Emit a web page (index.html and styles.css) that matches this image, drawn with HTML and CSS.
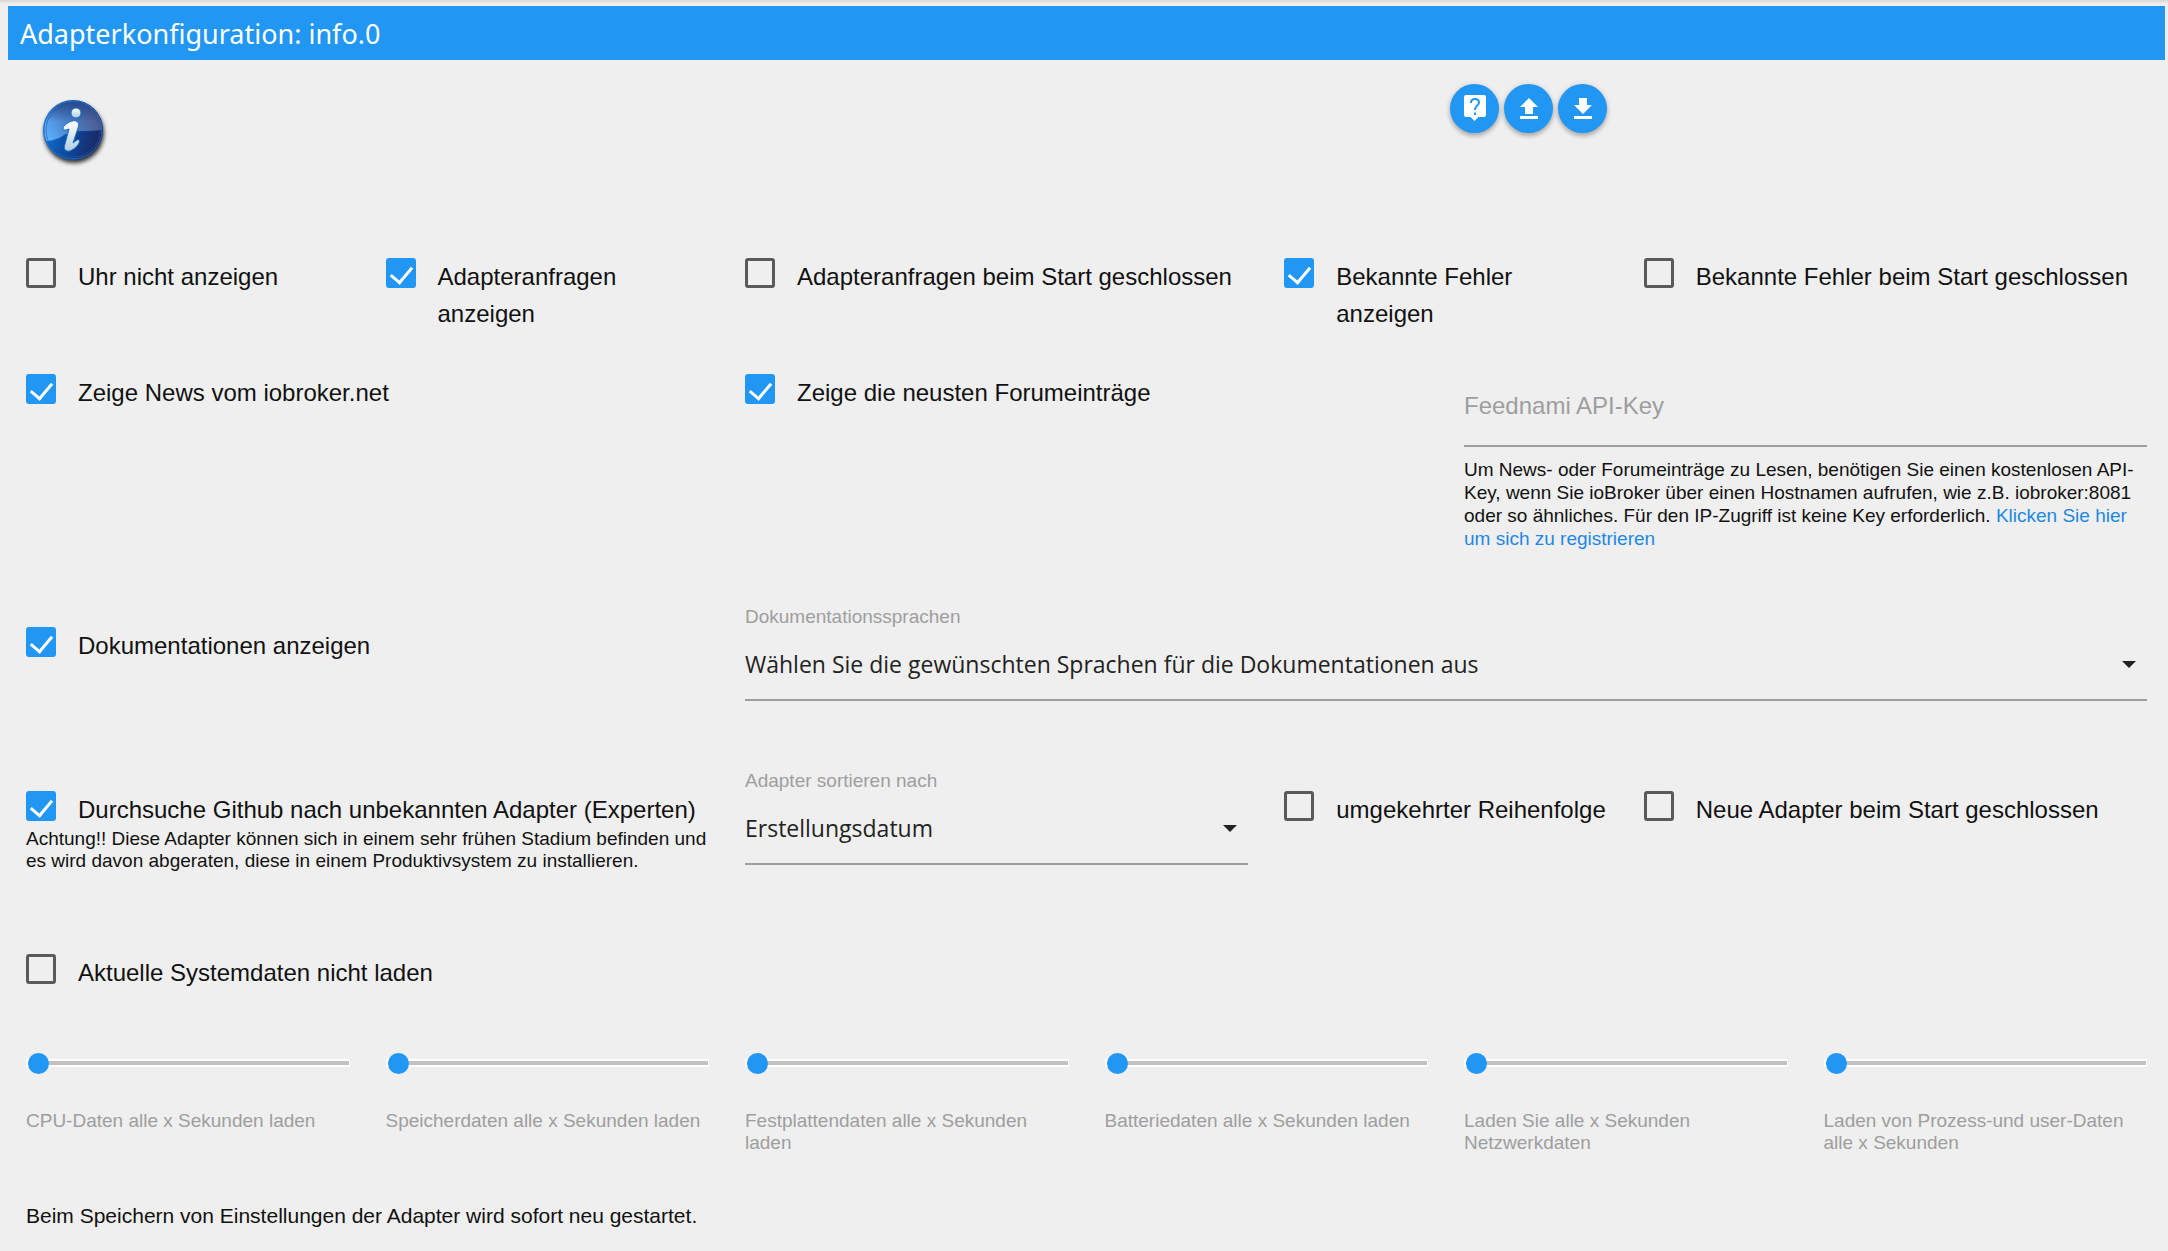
FILE: index.html
```html
<!DOCTYPE html>
<html lang="de">
<head>
<meta charset="utf-8">
<meta name="viewport" content="width=device-width, initial-scale=1">
<title>Adapterkonfiguration: info.0</title>
<link rel="stylesheet" href="styles.css">
</head>
<body>
<header class="titlebar"><h1 class="title">Adapterkonfiguration: info.0</h1></header>
<main class="page">
  <div class="row toolbar">
    <div class="col s8">
      <svg class="logo" viewBox="0 0 72 72" role="img" aria-label="info">
        <defs>
          <linearGradient id="base" x1="0" y1="0.3" x2="1" y2="0.6">
            <stop offset="0" stop-color="#0a7be6"/><stop offset="0.5" stop-color="#0d4a9f"/><stop offset="1" stop-color="#1b2560"/>
          </linearGradient>
          <linearGradient id="gloss" x1="0" y1="0.8" x2="1" y2="0.4">
            <stop offset="0" stop-color="#5cb0ff"/><stop offset="0.45" stop-color="#4a7fc4"/><stop offset="1" stop-color="#4f5489"/>
          </linearGradient>
          <linearGradient id="shade" x1="0" y1="0" x2="0" y2="1">
            <stop offset="0" stop-color="#1d3f85" stop-opacity="0.8"/><stop offset="0.7" stop-color="#1d3f85" stop-opacity="0"/>
          </linearGradient>
          <linearGradient id="glyph" x1="0" y1="0" x2="0" y2="1">
            <stop offset="0" stop-color="#ffffff"/><stop offset="1" stop-color="#b4cddd"/>
          </linearGradient>
          <filter id="blur" x="-20%" y="-20%" width="140%" height="140%"><feGaussianBlur stdDeviation="2"/></filter>
        </defs>
        <circle cx="34" cy="37" r="30" fill="#000" opacity="0.8" filter="url(#blur)"/>
        <circle cx="33" cy="34" r="30" fill="url(#base)"/>
        <path d="M4 34a29 29 0 0 1 58 0c-13 2-27-1-38 5-6 4-13 6-18 6a29 29 0 0 1-2-11z" fill="url(#gloss)"/>
        <path d="M4 34a29 29 0 0 1 58 0z" fill="url(#shade)"/>
        <circle cx="33" cy="34" r="29" fill="none" stroke="#2475cc" stroke-width="1" opacity="0.8"/>
        <circle cx="33" cy="34" r="27" fill="none" stroke="#26549b" stroke-width="1" opacity="0.6"/>
        <g fill="url(#glyph)" stroke="#1672cf" stroke-width="1">
          <ellipse cx="36" cy="17" rx="5" ry="5"/>
          <path d="M24 30c3-3 8-6 12-5 3 1 3 4 2 7l-5 15 4-3c2-1 3 1 2 3-2 4-8 9-12 8-3-1-3-4-2-7l4-15-3 1c-2 1-4-2-2-4z"/>
        </g>
      </svg>
    </div>
    <div class="actions">
      <button class="round" type="button" aria-label="Hilfe">
        <svg viewBox="0 0 24 27" width="24" height="27" fill="none"><path d="M3 0h18q2 0 2 2v18q0 2-2 2h-5.500l-4 4-4-4H3q-2 0-2-2V2q0-2 2-2z" fill="#fff"/><path d="M8 8V7.500q0-3.500 4-3.500t4 3.500c0 3-4 3.500-4 7.500M12 17.500V20" stroke="#2196f3" stroke-width="2"/></svg>
      </button>
      <button class="round" type="button" aria-label="Hochladen">
        <svg viewBox="0 0 18 22" width="18" height="22"><path d="M9 0l9 9h-5v7H5V9H0zM0 18h18v3H0z" fill="#fff"/></svg>
      </button>
      <button class="round" type="button" aria-label="Herunterladen">
        <svg viewBox="0 0 18 22" width="18" height="22"><path d="M5 0h8v7h5l-9 9-9-9h5zM0 18h18v3H0z" fill="#fff"/></svg>
      </button>
    </div>
  </div>

  <div class="row first">
    <div class="col s2"><label class="check"><input type="checkbox"><span>Uhr nicht anzeigen</span></label></div>
    <div class="col s2"><label class="check"><input type="checkbox" checked><span>Adapteranfragen anzeigen</span></label></div>
    <div class="col s3"><label class="check"><input type="checkbox"><span>Adapteranfragen beim Start geschlossen</span></label></div>
    <div class="col s2"><label class="check"><input type="checkbox" checked><span>Bekannte Fehler anzeigen</span></label></div>
    <div class="col s3"><label class="check"><input type="checkbox"><span>Bekannte Fehler beim Start geschlossen</span></label></div>
  </div>

  <div class="row news">
    <div class="col s4"><label class="check"><input type="checkbox" checked><span>Zeige News vom iobroker.net</span></label></div>
    <div class="col s4"><label class="check"><input type="checkbox" checked><span>Zeige die neusten Forumeinträge</span></label></div>
    <div class="col s4">
      <input class="text" type="text" placeholder="Feednami API-Key" aria-label="Feednami API-Key">
      <p class="hint key-hint">Um News- oder Forumeinträge zu Lesen, benötigen Sie einen kostenlosen API-Key, wenn Sie ioBroker über einen Hostnamen aufrufen, wie z.B. iobroker:8081 oder so ähnliches. Für den IP-Zugriff ist keine Key erforderlich. <a href="#">Klicken Sie hier um sich zu registrieren</a></p>
    </div>
  </div>

  <div class="row docs">
    <div class="col s4 drop"><label class="check"><input type="checkbox" checked><span>Dokumentationen anzeigen</span></label></div>
    <div class="col s8">
      <label class="caption" for="langs">Dokumentationssprachen</label>
      <select id="langs"><option>Wählen Sie die gewünschten Sprachen für die Dokumentationen aus</option></select>
    </div>
  </div>

  <div class="row github">
    <div class="col s4 drop">
      <label class="check"><input type="checkbox" checked><span>Durchsuche Github nach unbekannten Adapter (Experten)</span></label>
      <p class="hint">Achtung!! Diese Adapter können sich in einem sehr frühen Stadium befinden und es wird davon abgeraten, diese in einem Produktivsystem zu installieren.</p>
    </div>
    <div class="col s3">
      <label class="caption" for="sort">Adapter sortieren nach</label>
      <select id="sort"><option>Erstellungsdatum</option></select>
    </div>
    <div class="col s2 drop"><label class="check"><input type="checkbox"><span>umgekehrter Reihenfolge</span></label></div>
    <div class="col s3 drop"><label class="check"><input type="checkbox"><span>Neue Adapter beim Start geschlossen</span></label></div>
  </div>

  <div class="row system">
    <div class="col s12"><label class="check"><input type="checkbox"><span>Aktuelle Systemdaten nicht laden</span></label></div>
  </div>

  <div class="row sliders">
    <div class="col s2"><input id="cpu" type="range" min="0" max="60" value="0"><label class="caption" for="cpu">CPU-Daten alle x Sekunden laden</label></div>
    <div class="col s2"><input id="mem" type="range" min="0" max="60" value="0"><label class="caption" for="mem">Speicherdaten alle x Sekunden laden</label></div>
    <div class="col s2"><input id="disk" type="range" min="0" max="60" value="0"><label class="caption" for="disk">Festplattendaten alle x Sekunden laden</label></div>
    <div class="col s2"><input id="bat" type="range" min="0" max="60" value="0"><label class="caption" for="bat">Batteriedaten alle x Sekunden laden</label></div>
    <div class="col s2"><input id="net" type="range" min="0" max="60" value="0"><label class="caption" for="net">Laden Sie alle x Sekunden Netzwerkdaten</label></div>
    <div class="col s2"><input id="proc" type="range" min="0" max="60" value="0"><label class="caption" for="proc">Laden von Prozess-und user-Daten alle x Sekunden</label></div>
  </div>

  <p class="note">Beim Speichern von Einstellungen der Adapter wird sofort neu gestartet.</p>
</main>
</body>
</html>
```
FILE: styles.css
```css
* {
  box-sizing: border-box;
}

body {
  margin: 0;
  padding: 6px 3px 0 8px;
  background: #efefef linear-gradient(#d6d6d6, #efefef) no-repeat 0 0 / 100% 4px;
  color: #111;
  font-family: "Liberation Sans", Arial, sans-serif;
  font-size: 24px;
}

.titlebar {
  display: flex;
  align-items: center;
  height: 54px;
  padding: 2px 12px 0;
  background: #2196f3;
}

.title {
  margin: 0;
  color: #fff;
  font: 400 27px/52px "Noto Sans", "Open Sans", sans-serif;
}

/* Twelve-column layout */
.row {
  display: grid;
  grid-template-columns: repeat(12, minmax(0, 1fr));
  align-items: start;
}

.col {
  padding: 0 18px;
}

.s2 { grid-column: span 2; }
.s3 { grid-column: span 3; }
.s4 { grid-column: span 4; }
.s8 { grid-column: span 8; }
.s12 { grid-column: span 12; }

.drop {
  padding-top: 21px;
}

.toolbar {
  height: 198px;
  padding-top: 24px;
}

.logo {
  display: block;
  width: 72px;
  height: 72px;
  margin: 12px 0 0 14px;
}

.actions {
  display: flex;
  grid-column: span 4;
  gap: 5px;
  padding-left: 4px;
}

.round {
  display: flex;
  align-items: center;
  justify-content: center;
  width: 49px;
  height: 49px;
  padding: 0;
  border: 0;
  border-radius: 50%;
  background: #2196f3;
  box-shadow: 0 3px 4px rgba(0, 0, 0, 0.22), 0 1px 6px rgba(0, 0, 0, 0.14);
}

/* Form controls */
.check {
  display: flex;
  align-items: flex-start;
  gap: 22px;
  line-height: 37px;
}

.check input {
  flex: none;
  appearance: none;
  width: 30px;
  height: 30px;
  margin: 0;
  border: 3px solid #5a5a5a;
  border-radius: 3px;
}

.check input:checked {
  border-color: #2196f3;
  background: #2196f3;
}

.check input:checked::before {
  content: "";
  display: block;
  width: 10px;
  height: 18px;
  margin: 1px 0 0 6px;
  border: solid #fff;
  border-width: 0 3px 3px 0;
  transform: rotate(40deg);
}

.text,
select {
  display: block;
  width: 100%;
  height: 73px;
  padding: 0;
  border: 0;
  border-bottom: 2px solid #9e9e9e;
  border-radius: 0;
  outline: 0;
  background: transparent;
  color: #222;
  appearance: none;
}

.text {
  padding-bottom: 7px;
  font: 24px "Liberation Sans", Arial, sans-serif;
}

.text::placeholder {
  color: #9e9e9e;
}

select {
  background: url("data:image/svg+xml,%3Csvg xmlns='http://www.w3.org/2000/svg' viewBox='0 0 14 7'%3E%3Cpath d='M0 0h14L7 7z' fill='%23222'/%3E%3C/svg%3E") no-repeat right 11px top 33px / 14px 7px;
  font: 23px "Open Sans", "Noto Sans", sans-serif;
}

.caption {
  display: block;
  color: #9e9e9e;
  font-size: 19px;
  line-height: 22px;
}

.hint {
  margin: 0;
  font-size: 19px;
  line-height: 22px;
}

.key-hint {
  margin-top: 11px;
  line-height: 23px;
}

a {
  color: #1e88e5;
  text-decoration: none;
}

.news { margin-top: 42px; }
.docs { margin-top: 56px; }
.github { margin-top: 69px; }
.system { margin-top: 82px; }
.sliders { margin-top: 61px; }

input[type="range"] {
  display: block;
  appearance: none;
  width: 100%;
  height: 22px;
  margin: 0 0 36px;
  background: transparent;
}

input[type="range"]::-webkit-slider-runnable-track {
  height: 8px;
  border: solid #fff;
  border-width: 2px 1px 2px 2px;
  background: #c2c0c1;
}

input[type="range"]::-webkit-slider-thumb {
  appearance: none;
  width: 21px;
  height: 21px;
  margin-top: -8px;
  border-radius: 50%;
  background: #2196f3;
}

.note {
  margin: 50px 18px 0;
  font-size: 21px;
  line-height: 24px;
}
```
